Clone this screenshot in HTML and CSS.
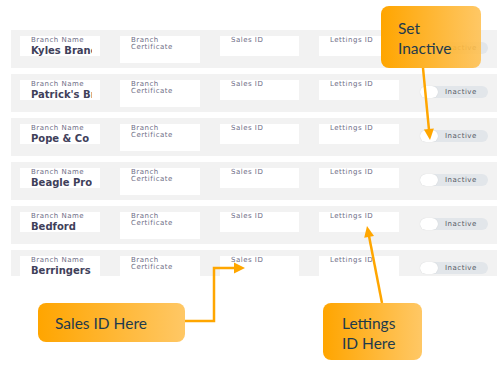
FILE: index.html
```
<!DOCTYPE html>
<html>
<head>
<meta charset="utf-8">
<link rel="stylesheet" href="styles.css">
</head>
<body>
<div class="page">
  <div class="list">
    <div class="row">
      <div class="field"><div class="label">Branch Name</div><div class="value">Kyles Branch</div></div>
      <div class="field cert"><div class="label">Branch<br>Certificate</div></div>
      <div class="field sales"><div class="label">Sales ID</div></div>
      <div class="field"><div class="label">Lettings ID</div></div>
      <div class="toggle"><span class="knob"></span><span class="tlabel">Inactive</span></div>
    </div>
    <div class="row">
      <div class="field"><div class="label">Branch Name</div><div class="value">Patrick's Branch</div></div>
      <div class="field cert"><div class="label">Branch<br>Certificate</div></div>
      <div class="field sales"><div class="label">Sales ID</div></div>
      <div class="field"><div class="label">Lettings ID</div></div>
      <div class="toggle"><span class="knob"></span><span class="tlabel">Inactive</span></div>
    </div>
    <div class="row">
      <div class="field"><div class="label">Branch Name</div><div class="value">Pope &amp; Co</div></div>
      <div class="field cert"><div class="label">Branch<br>Certificate</div></div>
      <div class="field sales"><div class="label">Sales ID</div></div>
      <div class="field"><div class="label">Lettings ID</div></div>
      <div class="toggle"><span class="knob"></span><span class="tlabel">Inactive</span></div>
    </div>
    <div class="row">
      <div class="field"><div class="label">Branch Name</div><div class="value">Beagle Properties</div></div>
      <div class="field cert"><div class="label">Branch<br>Certificate</div></div>
      <div class="field sales"><div class="label">Sales ID</div></div>
      <div class="field"><div class="label">Lettings ID</div></div>
      <div class="toggle"><span class="knob"></span><span class="tlabel">Inactive</span></div>
    </div>
    <div class="row">
      <div class="field"><div class="label">Branch Name</div><div class="value">Bedford</div></div>
      <div class="field cert"><div class="label">Branch<br>Certificate</div></div>
      <div class="field sales"><div class="label">Sales ID</div></div>
      <div class="field"><div class="label">Lettings ID</div></div>
      <div class="toggle"><span class="knob"></span><span class="tlabel">Inactive</span></div>
    </div>
    <div class="row">
      <div class="field"><div class="label">Branch Name</div><div class="value">Berringers</div></div>
      <div class="field cert"><div class="label">Branch<br>Certificate</div></div>
      <div class="field sales"><div class="label">Sales ID</div></div>
      <div class="field"><div class="label">Lettings ID</div></div>
      <div class="toggle"><span class="knob"></span><span class="tlabel">Inactive</span></div>
    </div>
  </div>

  <svg class="arrows" width="497" height="368" viewBox="0 0 497 368">
    <g stroke="#ffa600" stroke-width="2.5" fill="none">
      <line x1="423" y1="68" x2="429" y2="130"/>
      <polyline points="185,321 214,321 214,268 235,268"/>
      <line x1="382" y1="303" x2="369" y2="236"/>
    </g>
    <g fill="#ffa600">
      <polygon points="430,140 433.9,128.6 423.9,129.6"/>
      <polygon points="245,268 234,262.5 234,273.5"/>
      <polygon points="367,226 374,235.9 364.2,237.8"/>
    </g>
  </svg>

  <div class="callout c-inactive">Set<br>Inactive</div>
  <div class="callout c-sales">Sales ID Here</div>
  <div class="callout c-lettings">Lettings<br>ID Here</div>
</div>
</body>
</html>
```
FILE: styles.css
```
html, body {
  margin: 0;
  padding: 0;
  background: #ffffff;
}

.page {
  position: relative;
  width: 497px;
  height: 368px;
  overflow: hidden;
  font-family: "DejaVu Sans", sans-serif;
}

.list {
  margin: 30px 0 0 11px;
  height: 246px;
  overflow: hidden;
  display: flex;
  flex-direction: column;
  gap: 6px;
}

.row {
  flex: 0 0 38px;
  box-sizing: border-box;
  background: #f2f2f2;
  display: flex;
  align-items: flex-start;
  gap: 20px;
  padding: 6px 0 0 9px;
}

.field {
  box-sizing: border-box;
  width: 80px;
  height: 20px;
  background: #ffffff;
  padding: 1px 8px 0 11px;
  overflow: hidden;
  white-space: nowrap;
}

.field.cert {
  height: 27px;
}

.field.sales {
  width: 79px;
}

.label {
  font-size: 7px;
  line-height: 7px;
  letter-spacing: 0.5px;
  color: #6e6d86;
}

.value {
  margin-top: 1px;
  font-size: 10px;
  line-height: 11px;
  font-weight: bold;
  color: #40405a;
  overflow: hidden;
}

.toggle {
  margin: 6px 0 0 1px;
  width: 68px;
  height: 12px;
  border-radius: 6px;
  background: #e2e6ea;
  display: flex;
  align-items: center;
}

.knob {
  width: 18px;
  height: 12px;
  border-radius: 6px;
  background: #ffffff;
  box-shadow: 0 0 1px rgba(0, 0, 0, 0.15);
}

.tlabel {
  margin-left: 7px;
  font-size: 7px;
  letter-spacing: 0.5px;
  color: #565a66;
}

.arrows {
  position: absolute;
  left: 0;
  top: 0;
}

.callout {
  position: absolute;
  box-sizing: border-box;
  border-radius: 8px;
  background: linear-gradient(to right, rgba(255, 165, 0, 1), rgba(255, 192, 80, 0.88));
  color: #1e3a4c;
  font-family: "Lato", "Liberation Sans", sans-serif;
  font-size: 15.5px;
  line-height: 20px;
  padding-left: 17px;
  display: flex;
  align-items: center;
}

.c-inactive {
  left: 381px;
  top: 6px;
  width: 100px;
  height: 62px;
  padding-top: 1px;
}

.c-sales {
  left: 38px;
  top: 303px;
  width: 147px;
  height: 39px;
}

.c-lettings {
  left: 323px;
  top: 303px;
  width: 99px;
  height: 57px;
  padding-left: 19px;
  padding-top: 3px;
}
```
